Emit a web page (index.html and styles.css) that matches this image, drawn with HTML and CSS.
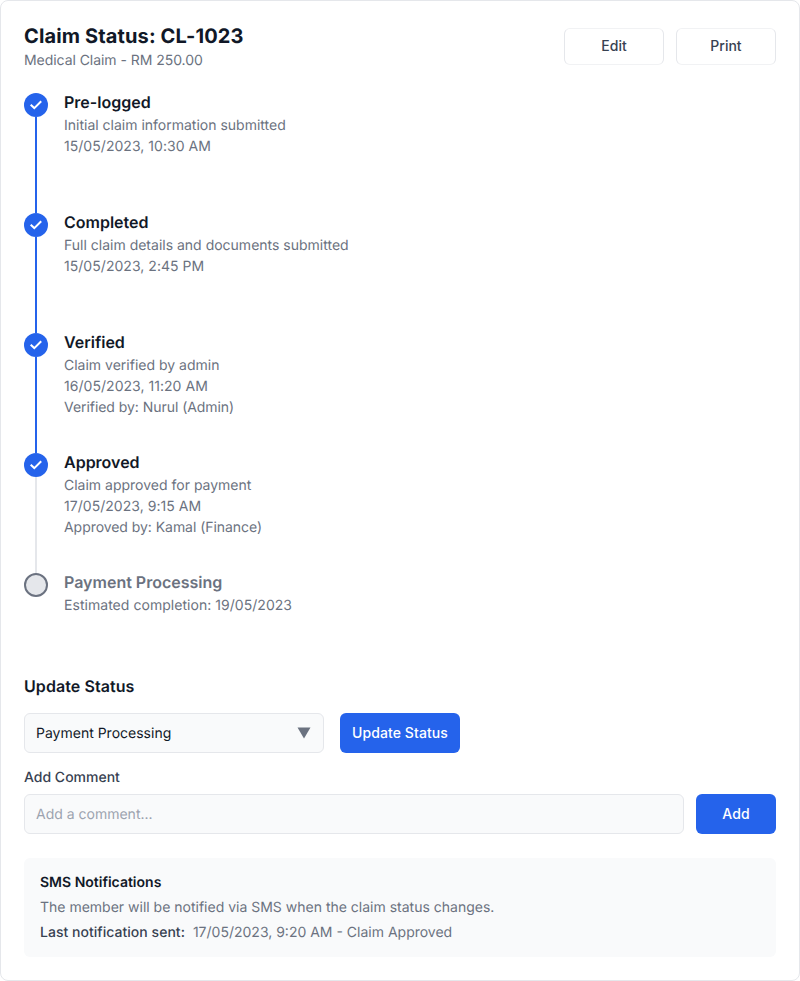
FILE: index.html
```html
<!DOCTYPE html>
<html lang="en">
<head>
<meta charset="utf-8">
<title>Claim Status</title>
<link rel="stylesheet" href="styles.css">
</head>
<body>
<main class="card">
  <header class="header">
    <div>
      <h1>Claim Status: CL-1023</h1>
      <p class="subtitle">Medical Claim - RM 250.00</p>
    </div>
    <div class="actions">
      <button class="btn outline">Edit</button>
      <button class="btn outline">Print</button>
    </div>
  </header>

  <ol class="timeline">
    <li class="step">
      <div class="rail"><span class="dot"><svg viewBox="0 0 24 24"><path d="M6.7 11.7l3.6 3.4L17.2 8.2"/></svg></span></div>
      <div class="info"><h2>Pre-logged</h2><p>Initial claim information submitted</p><p class="date">15/05/2023, 10:30 AM</p></div>
    </li>
    <li class="step">
      <div class="rail"><span class="dot"><svg viewBox="0 0 24 24"><path d="M6.7 11.7l3.6 3.4L17.2 8.2"/></svg></span></div>
      <div class="info"><h2>Completed</h2><p>Full claim details and documents submitted</p><p class="date">15/05/2023, 2:45 PM</p></div>
    </li>
    <li class="step">
      <div class="rail"><span class="dot"><svg viewBox="0 0 24 24"><path d="M6.7 11.7l3.6 3.4L17.2 8.2"/></svg></span></div>
      <div class="info"><h2>Verified</h2><p>Claim verified by admin</p><p class="date">16/05/2023, 11:20 AM</p><p class="person">Verified by: Nurul (Admin)</p></div>
    </li>
    <li class="step next-pending">
      <div class="rail"><span class="dot"><svg viewBox="0 0 24 24"><path d="M6.7 11.7l3.6 3.4L17.2 8.2"/></svg></span></div>
      <div class="info"><h2>Approved</h2><p>Claim approved for payment</p><p class="date">17/05/2023, 9:15 AM</p><p class="person">Approved by: Kamal (Finance)</p></div>
    </li>
    <li class="step pending">
      <div class="rail"><span class="dot"></span></div>
      <div class="info"><h2>Payment Processing</h2><p class="date">Estimated completion: 19/05/2023</p></div>
    </li>
  </ol>

  <section class="update">
    <h2>Update Status</h2>
    <div class="row">
      <div class="field select"><span>Payment Processing</span><svg class="caret" viewBox="0 0 14 12"><path d="M0.5 0.5h13L7 11.5z"/></svg></div>
      <button class="btn primary">Update Status</button>
    </div>
    <div class="label">Add Comment</div>
    <div class="row comment">
      <div class="field placeholder">Add a comment...</div>
      <button class="btn primary add">Add</button>
    </div>
  </section>

  <section class="sms">
    <h3>SMS Notifications</h3>
    <p>The member will be notified via SMS when the claim status changes.</p>
    <p><span class="strong">Last notification sent:</span><span>17/05/2023, 9:20 AM - Claim Approved</span></p>
  </section>
</main>
</body>
</html>
```
FILE: styles.css
```css
* { box-sizing: border-box; margin: 0; padding: 0; }
body { background: #fff; font-family: Inter, sans-serif; font-size: 14px; color: #6b7280; text-rendering: geometricPrecision; }
.card { width: 800px; height: 981px; padding: 23px; border: 1px solid #e5e7eb; border-radius: 8px; background: #fff; }
.header { display: flex; justify-content: space-between; height: 69px; }
h1 { font-size: 20px; line-height: 24px; font-weight: 700; letter-spacing: 0.13px; color: #111827; }
.subtitle { line-height: 17px; margin-top: 4px; letter-spacing: -0.05px; }
.actions { display: flex; gap: 12px; padding-top: 4px; }
.btn { font: 500 14px/17px Inter, sans-serif; border-radius: 6px; padding-bottom: 2px; }
.outline { width: 100px; height: 37px; border: 1px solid #e5e7eb; border-top-color: #f1f2f4; border-bottom-color: #f1f2f4; background: #fff; color: #374151; }
.timeline { list-style: none; }
.step { display: flex; gap: 16px; height: 120px; }
.rail { width: 24px; display: flex; flex-direction: column; align-items: center; }
.rail::after { content: ""; width: 2px; flex: 1; background: #2563eb; }
.next-pending .rail::after { background: #e5e7eb; }
.pending .rail::after { display: none; }
.dot { width: 24px; height: 24px; border-radius: 50%; background: #2563eb; }
.dot svg { display: block; width: 24px; height: 24px; fill: none; stroke: #fff; stroke-width: 2; }
.pending .dot { background: #e5e7eb; border: 2px solid #6b7280; }
.step h2 { font-size: 16px; line-height: 19px; font-weight: 600; color: #111827; margin-bottom: 3px; }
.step.pending h2 { color: #6b7280; }
.step p { line-height: 21px; }
.date { letter-spacing: 0.04px; }
.person { letter-spacing: -0.05px; }
.step.pending { height: 104px; }
.update h2 { font-size: 16px; line-height: 19px; font-weight: 600; letter-spacing: 0.07px; color: #111827; margin-bottom: 17px; }
.row { display: flex; gap: 16px; }
.field { height: 40px; border: 1px solid #e5e7eb; border-radius: 6px; background: #f9fafb; padding: 0 11px; display: flex; align-items: center; }
.select { width: 300px; justify-content: space-between; color: #111827; }
.caret { width: 14px; height: 12px; margin-right: 1px; fill: #6b7280; }
.primary { width: 120px; height: 40px; border: 0; background: #2563eb; color: #fff; letter-spacing: 0.08px; }
.label { font-weight: 500; line-height: 17px; color: #374151; margin: 16px 0 8px; }
.comment { gap: 12px; }
.placeholder { flex: 1; color: #9ca3af; }
.primary.add { width: 80px; }
.sms { margin-top: 24px; height: 99px; padding: 16px; border-radius: 6px; background: #f9fafb; }
.sms h3 { font-size: 14px; line-height: 17px; font-weight: 600; color: #111827; margin-bottom: 8px; }
.sms p { line-height: 17px; margin-bottom: 8px; }
.strong { font-weight: 500; color: #374151; margin-right: 8px; letter-spacing: 0.03px; }
```
